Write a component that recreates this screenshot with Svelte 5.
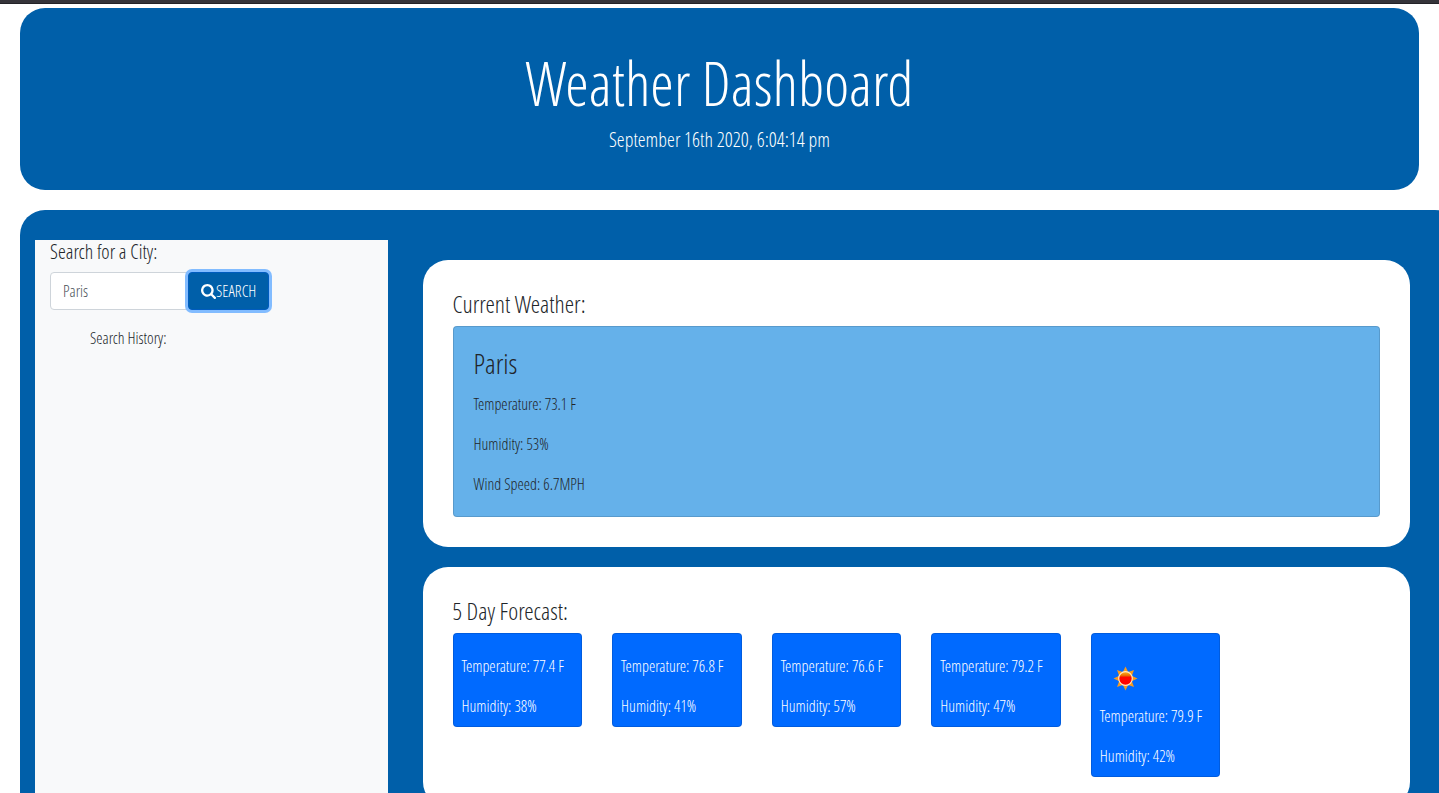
<script>
  const current = { city: 'Paris', temperature: '73.1', humidity: 53, wind: '6.7' };
  const forecast = [
    { temperature: '77.4', humidity: 38 },
    { temperature: '76.8', humidity: 41 },
    { temperature: '76.6', humidity: 57 },
    { temperature: '79.2', humidity: 47 },
    { temperature: '79.9', humidity: 42, sunny: true }
  ];
  let query = $state('Paris');
</script>

<div class="page">
  <div class="topline"></div>

  <header class="banner">
    <h1>Weather Dashboard</h1>
    <p>September 16th 2020, 6:04:14 pm</p>
  </header>

  <div class="board">
    <aside class="sidebar">
      <label for="city">Search for a City:</label>
      <form class="search" onsubmit={(e) => e.preventDefault()}>
        <input id="city" type="text" bind:value={query} />
        <button type="submit">
          <svg viewBox="0 0 1664 1664" aria-hidden="true">
            <path d="M1152 704q0-185-131.500-316.500t-316.500-131.500-316.500 131.500-131.500 316.500 131.500 316.500 316.500 131.500 316.500-131.500 131.500-316.500zm512 832q0 52-38 90t-90 38q-54 0-90-38l-343-342q-179 124-399 124-143 0-273.500-55.500t-225-150-150-225-55.500-273.500 55.500-273.500 150-225 225-150 273.500-55.500 273.500 55.500 225 150 150 225 55.500 273.500q0 220-124 399l343 343q37 37 37 90z" />
          </svg>SEARCH
        </button>
      </form>
      <p class="history">Search History:</p>
    </aside>

    <main class="content">
      <section class="panel">
        <h2>Current Weather:</h2>
        <div class="card current">
          <h3>{current.city}</h3>
          <p>Temperature: {current.temperature} F</p>
          <p>Humidity: {current.humidity}%</p>
          <p>Wind Speed: {current.wind}MPH</p>
        </div>
      </section>

      <section class="panel">
        <h2>5 Day Forecast:</h2>
        <div class="days">
          {#each forecast as day}
            <div class="card day">
              {#if day.sunny}
                <svg class="sun" viewBox="0 0 50 50" role="img" aria-label="Clear sky">
                  <defs>
                    <linearGradient id="sunFace" x1="0" y1="0" x2="0" y2="1">
                      <stop offset="0" stop-color="#ffb820" />
                      <stop offset="0.3" stop-color="#e86a00" />
                      <stop offset="0.4" stop-color="#ff0800" />
                      <stop offset="1" stop-color="#ff0000" />
                    </linearGradient>
                  </defs>
                  <g fill="#f79a1e">
                    {#each [0, 45, 90, 135, 180, 225, 270, 315] as angle}
                      <path d="M25.500 12.500 29 20H22Z" transform="rotate({angle} 25.500 24.500)" />
                    {/each}
                  </g>
                  <circle cx="25.500" cy="24.500" r="6.800" fill="url(#sunFace)" stroke="#ffe9c4" stroke-width="1.200" />
                </svg>
              {/if}
              <p>Temperature: {day.temperature} F</p>
              <p>Humidity: {day.humidity}%</p>
            </div>
          {/each}
        </div>
      </section>
    </main>
  </div>
</div>

<style>
  :global(body) {
    margin: 0;
    background: #fff;
  }

  .page,
  .page * {
    box-sizing: border-box;
  }

  .page {
    min-height: 100vh;
    display: flex;
    flex-direction: column;
    overflow: hidden;
    font-family: "Open Sans Condensed Light", "Open Sans", sans-serif;
    font-size: 16px;
    font-weight: 300;
    line-height: 24px;
    color: #212529;
  }

  h1,
  h2,
  h3,
  p {
    margin: 0;
    font-weight: 300;
  }

  .topline {
    height: 4px;
    background: #35343a;
    border-bottom: 1px solid #232227;
  }

  .banner {
    margin: 4px 20px 0;
    padding: 38px 30px;
    border-radius: 25px;
    background: #005fa9;
    color: #fff;
    text-align: center;
  }

  h1 {
    margin-bottom: 8px;
    font-size: 60px;
    line-height: 74px;
  }

  .banner p {
    font-size: 20px;
  }

  /* The board runs past the right edge of the window by its own left margin. */
  .board {
    flex: 1;
    display: grid;
    grid-template-columns: 1fr 3fr;
    margin: 20px -21px 0 20px;
    padding: 30px 15px 0;
    border-radius: 25px 25px 0 0;
    background: #005fa9;
  }

  .sidebar {
    padding: 0 15px;
    background: #f8f9fa;
  }

  label {
    display: block;
    margin-bottom: 8px;
    font-size: 20px;
  }

  .search {
    display: flex;
    margin-bottom: 16px;
  }

  input {
    width: 138px;
    height: 38px;
    padding: 6px 12px;
    border: 1px solid #ced4da;
    border-radius: 4px 0 0 4px;
    background: #fff;
    color: #495057;
    font: inherit;
  }

  button {
    display: flex;
    align-items: center;
    height: 38px;
    padding: 6px 12px;
    border: 1px solid #005cbf;
    border-radius: 4px;
    background: #005fa9;
    box-shadow: 0 0 0 3px #82bcff;
    color: #fff;
    font: inherit;
  }

  button svg {
    width: 15px;
    height: 15px;
    fill: currentColor;
  }

  .history {
    padding-left: 40px;
  }

  .content {
    display: flex;
    flex-direction: column;
    gap: 20px;
    padding: 20px 35px;
  }

  .panel {
    padding: 30px;
    border-radius: 25px;
    background: #fff;
  }

  h2 {
    margin-bottom: 8px;
    font-size: 24px;
    line-height: 28px;
  }

  .card {
    display: flex;
    flex-direction: column;
    border: 1px solid rgba(0, 0, 0, 0.125);
    border-radius: 4px;
  }

  .current {
    gap: 16px;
    padding: 20px;
    background: #65b1ea;
  }

  h3 {
    margin-bottom: -4px;
    font-size: 28px;
    line-height: 33px;
  }

  .days {
    display: grid;
    grid-template-columns: repeat(6, 1fr);
    align-items: start;
    gap: 30px;
  }

  .day {
    padding: 20px 8px 8px;
    background: #006aff;
    color: #fff;
  }

  .day p + p {
    margin-top: 16px;
  }

  .sun {
    width: 50px;
    height: 50px;
  }
</style>
